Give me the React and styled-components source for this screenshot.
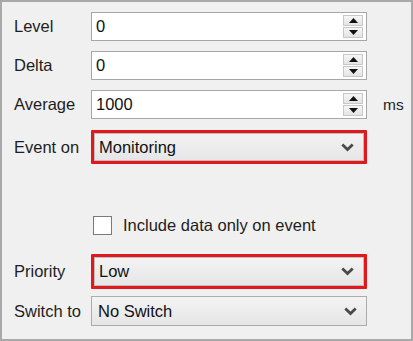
import React from "react";
import styled, { createGlobalStyle } from "styled-components";

const Global = createGlobalStyle`
  html, body { margin: 0; padding: 0; background: #f0f0f0; }
  body { font-family: "Liberation Sans", Arial, sans-serif; }
`;

const Panel = styled.div`
  box-sizing: border-box;
  width: 413px;
  height: 341px;
  background: #f0f0f0;
  border: 2px solid #a9a9a9;
  padding: 10px 0 0 12px;
  display: flex;
  flex-direction: column;
  color: #1e1e1e;
  font-size: 16.5px;
`;

const Row = styled.div`
  display: flex;
  align-items: center;
  height: ${(p) => p.$h}px;
  margin-top: ${(p) => p.$mt || 0}px;
`;

const Label = styled.div`
  width: 77px;
  flex: none;
`;

const InputBox = styled.div`
  box-sizing: border-box;
  width: 276px;
  height: 100%;
  background: #fff;
  border: 1px solid #a7a7a7;
  display: flex;
  align-items: center;
  padding: 0 3px 0 4px;
`;

const Value = styled.span`
  flex: 1;
  color: #111;
`;

const Spin = styled.div`
  display: flex;
  flex-direction: column;
  gap: 1px;
  width: 20px;
`;

const SpinBtn = styled.div`
  box-sizing: border-box;
  height: 11px;
  border: 1px solid #c8c8c8;
  background: linear-gradient(#f6f6f6, #e4e4e4);
  display: flex;
  align-items: center;
  justify-content: center;
`;

const Unit = styled.span`
  margin-left: 16px;
  font-size: 15.5px;
`;

const Highlight = styled.div`
  box-sizing: border-box;
  width: 276px;
  height: 100%;
  border: 3px solid #e2191c;
  border-radius: 1px;
  display: flex;
`;

const Select = styled.div`
  box-sizing: border-box;
  width: ${(p) => (p.$plain ? "276px" : "100%")};
  height: 100%;
  background: linear-gradient(#f3f3f3, #e6e6e6);
  border: ${(p) => (p.$plain ? "1px solid #acacac" : "1px solid #bdbdbd")};
  display: flex;
  align-items: center;
  padding: 0 9px 0 ${(p) => (p.$plain ? 6 : 4)}px;
`;

const CheckRow = styled.div`
  display: flex;
  align-items: center;
  height: 19px;
  margin-top: ${(p) => p.$mt}px;
  padding-left: 79px;
`;

const Box = styled.div`
  box-sizing: border-box;
  width: 19px;
  height: 19px;
  background: #fff;
  border: 1px solid #7a7a7a;
  margin-right: 11px;
`;

const Up = () => (
  <svg width="9" height="5" viewBox="0 0 9 5">
    <polygon points="0,5 9,5 4.5,0" fill="#111" />
  </svg>
);
const Down = () => (
  <svg width="9" height="5" viewBox="0 0 9 5">
    <polygon points="0,0 9,0 4.5,5" fill="#111" />
  </svg>
);
const Chevron = () => (
  <svg width="13" height="9" viewBox="0 0 13 9">
    <path d="M1.3 1.6 L6.5 6.6 L11.7 1.6" fill="none" stroke="#4a4a4a" strokeWidth="2.8" />
  </svg>
);

const Numeric = ({ value }) => (
  <InputBox>
    <Value>{value}</Value>
    <Spin>
      <SpinBtn><Up /></SpinBtn>
      <SpinBtn><Down /></SpinBtn>
    </Spin>
  </InputBox>
);

export default function App() {
  return (
    <>
      <Global />
      <Panel>
        <Row $h={29}>
          <Label>Level</Label>
          <Numeric value="0" />
        </Row>
        <Row $h={29} $mt={10}>
          <Label>Delta</Label>
          <Numeric value="0" />
        </Row>
        <Row $h={29} $mt={10}>
          <Label>Average</Label>
          <Numeric value="1000" />
          <Unit>ms</Unit>
        </Row>
        <Row $h={34} $mt={11}>
          <Label>Event on</Label>
          <Highlight>
            <Select>
              <Value>Monitoring</Value>
              <Chevron />
            </Select>
          </Highlight>
        </Row>
        <CheckRow $mt={52}>
          <Box />
          <span>Include data only on event</span>
        </CheckRow>
        <Row $h={35} $mt={19}>
          <Label>Priority</Label>
          <Highlight>
            <Select>
              <Value>Low</Value>
              <Chevron />
            </Select>
          </Highlight>
        </Row>
        <Row $h={30} $mt={7}>
          <Label>Switch to</Label>
          <Select $plain>
            <Value>No Switch</Value>
            <Chevron />
          </Select>
        </Row>
      </Panel>
    </>
  );
}
